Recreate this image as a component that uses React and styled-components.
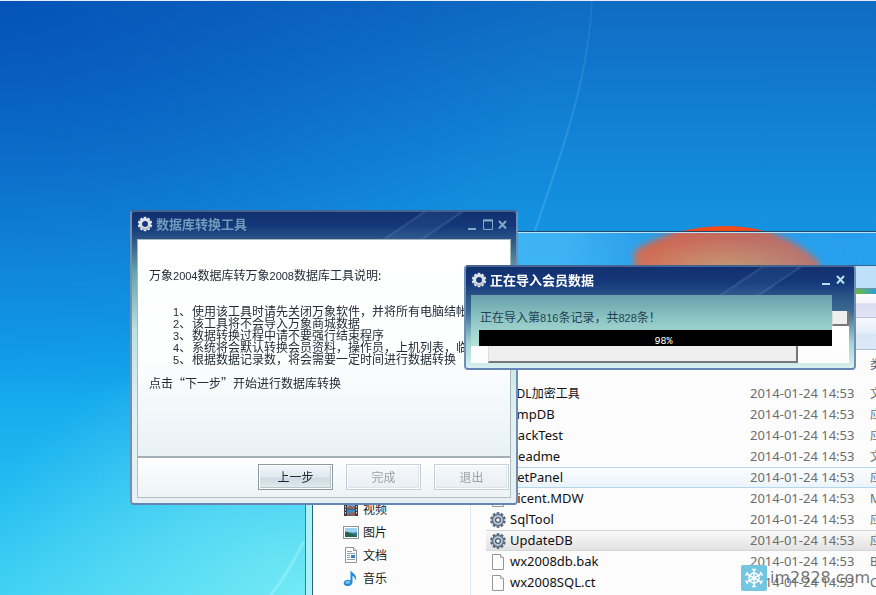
import React from 'react';
import styled, { createGlobalStyle } from 'styled-components';

const GlobalStyle = createGlobalStyle`
  * {
    box-sizing: border-box;
  }
  body {
    margin: 0;
    overflow: hidden;
    font-family: "Noto Sans CJK SC", "Liberation Sans", sans-serif;
    font-size: 12px;
  }
`;

const Desktop = styled.main`
  position: relative;
  min-height: 100vh;
  overflow: hidden;
  border-top: 1px solid #e4eef8;
  background:
    radial-gradient(ellipse 330px 260px at 300px 100%, rgba(132, 242, 246, 0.75), rgba(90, 225, 245, 0) 100%),
    radial-gradient(ellipse 560px 400px at 0 0, rgba(0, 70, 178, 0.65), rgba(0, 90, 205, 0) 100%),
    linear-gradient(180deg, #0f6bc2 0%, #1180d3 20%, #1492e0 38%, #12a4ec 62%, #25bdf1 84%, #3dcff3 100%);
`;

const Wallpaper = styled.svg`
  position: absolute;
  top: 0;
  left: 0;
`;

const Explorer = styled.section`
  position: absolute;
  top: 230px;
  left: 305px;
  right: 0;
  bottom: 0;
  display: flex;
  flex-direction: column;
  border-top: 1px solid #1f4668;
  border-left: 1px solid #3d7f92;
`;

const Glass = styled.header`
  height: 33px;
  border-top: 1px solid #b9e4fb;
  background: linear-gradient(90deg, rgba(90, 205, 255, 0.6), rgba(90, 200, 255, 0.6) 45%, rgba(110, 190, 255, 0.25) 60%, rgba(70, 175, 255, 0.4));
  backdrop-filter: blur(3px);
`;

const ExplorerBody = styled.div`
  flex: 1;
  display: flex;
  flex-direction: column;
  min-height: 0;
  border-left: 6px solid #a9f2f8;
  background: #fcfcfc;
`;

const AddressBar = styled.div`
  height: 29px;
  padding-top: 22px;
  border-top: 1px solid #33648e;
  border-bottom: 1px solid #e9f5fb;
  background: #bfe0f9;
`;

const LoadStrip = styled.div`
  height: 6px;
  border-top: 1px solid #7294a8;
  background: linear-gradient(90deg, #68b54c 0%, #68b54c 97%, #289ee0 100%);
`;

const MenuBar = styled.div`
  height: 24px;
  border-bottom: 1px solid #b7c6de;
  background: linear-gradient(180deg, #fdfdff 0%, #f3f3fa 40%, #d9dbef 42%, #e3e4f4 100%);
`;

const ToolBar = styled.div`
  height: 32px;
  border-bottom: 1px solid #a9bcd3;
  background: linear-gradient(180deg, #f5f9fe 0%, #e4eef9 48%, #d8e6f4 52%, #dde9f5 100%);
`;

const Columns = styled.div`
  flex: 1;
  display: flex;
  min-height: 0;
  border-left: 1px solid #2f5f7c;
`;

const Sidebar = styled.nav`
  width: 158px;
  padding: 147px 0 0 30px;
  border-right: 1px solid #dfe6f0;
`;

const Place = styled.a`
  display: flex;
  align-items: center;
  gap: 4px;
  height: 23px;
  color: #1a1a1a;
  text-decoration: none;
`;

const Files = styled.div`
  flex: 1;
  min-width: 0;
  padding-left: 15px;
  overflow: hidden;
`;

const FileTable = styled.table`
  width: 100%;
  table-layout: fixed;
  border-collapse: separate;
  border-spacing: 0;
`;

const HeadCell = styled.th`
  width: ${props => props.width || 'auto'};
  height: 33px;
  padding: 0 0 6px;
  overflow: hidden;
  color: #4c607a;
  font-weight: normal;
  text-align: left;
  white-space: nowrap;
`;

const rowLooks = {
  plain: 'border-color: transparent;',
  hover: 'border-color: #b5d6ea; background: linear-gradient(180deg, #fbfdff, #ebf4fc);',
  selected: 'border-color: #d6d6d6; background: linear-gradient(180deg, #f9f9f9, #e2e2e2);',
};

const FileCell = styled.td`
  height: 21px;
  padding: 0;
  border-top: 1px solid;
  border-bottom: 1px solid;
  overflow: hidden;
  color: ${props => (props.$muted ? '#6d6d6d' : '#111')};
  font-family: "Noto Sans", "Noto Sans CJK SC", sans-serif;
  font-size: ${props => (props.$small ? '12px' : '13px')};
  line-height: 19px;
  white-space: nowrap;
  ${props => rowLooks[props.$look]}
`;

const FileName = styled.span`
  display: flex;
  align-items: center;
  gap: 4px;
  height: 19px;
  padding-left: 4px;
`;

const Frame = styled.section`
  position: absolute;
  top: ${props => props.$top}px;
  left: ${props => props.$left}px;
  width: ${props => props.$width}px;
  padding: 0 5px 5px;
  border: 2px solid;
  border-color: #45648f #6f8fb4 #6684b4 #6f8fb4;
  border-radius: 4px;
  background: ${props => (props.$short
    ? 'linear-gradient(180deg, #12306f 0, #15397b 16px, #2c5688 30px, #3c6b93 45px, #9fd3d2 75px, #d8f0ef 100%)'
    : 'linear-gradient(180deg, #12306f 0, #14387a 14px, #2c5688 28px, #67a3a9 60px, #bde2e2 120px, #e2f0f1 200px, #e8f0f3 100%)')};
`;

const TitleBar = styled.header`
  display: flex;
  align-items: center;
  gap: 3px;
  height: ${props => props.$height}px;
  padding: 0 1px 3px 0;
  color: ${props => (props.$active ? '#fff' : '#6f9cbc')};
  background: linear-gradient(146deg, transparent 0 69%, rgba(130, 180, 220, 0.18) 69% 70%, rgba(130, 180, 220, 0.07) 70% 78%, rgba(130, 180, 220, 0.18) 78% 79%, transparent 79%);
`;

const Title = styled.h1`
  flex: 1;
  margin: 0;
  font-size: 13px;
  line-height: 20px;
`;

const TitleButton = styled.button`
  display: flex;
  width: 13px;
  height: 13px;
  padding: 0;
  border: 0;
  background: none;
  color: ${props => (props.$active ? '#b5e2ea' : '#7fabc4')};
`;

const WizardBody = styled.div`
  height: 219px;
  padding: 29px 0 0 11px;
  border: 1px solid #a9b8bd;
  border-bottom: 2px solid #a3afb4;
  overflow: hidden;
  background: linear-gradient(180deg, #fff 0%, #fdfefe 55%, #e9f1f6 100%);
  color: #222c38;
  line-height: 12px;
  white-space: nowrap;
`;

const Paragraph = styled.p`
  height: 12px;
  margin: 0;
`;

const Steps = styled.ol`
  margin: 24px 0 12px;
  padding-left: 24px;
  list-style: none;
`;

const Step = styled.li`
  display: grid;
  grid-template-columns: 19px 1fr;
  height: 12px;
`;

const Digits = styled.span`
  font-family: "Liberation Sans", sans-serif;
  font-size: 11px;
`;

const WizardFooter = styled.footer`
  display: flex;
  justify-content: flex-end;
  gap: 13px;
  height: 40px;
  padding: 6px 1px 0;
  border: 1px solid #b4bfc3;
  border-top: 0;
  background: linear-gradient(180deg, #fff, #edf3f5);
`;

const WizardButton = styled.button`
  width: 75px;
  height: 26px;
  padding: 0;
  border: 1px solid #8e9aa0;
  box-shadow: inset 0 0 0 1px #fff, inset -2px -2px 0 #b9c5ca;
  background: linear-gradient(180deg, #f2f6f8 0%, #dfe8ef 50%, #ced9e4 55%, #e3eeec 100%);
  color: #1c2630;
  font-family: inherit;
  font-size: 12px;
  line-height: 18px;

  &:disabled {
    border-color: #c7d0d5;
    box-shadow: inset 0 0 0 1px #fff, inset -2px -2px 0 #dde4e8;
    background: linear-gradient(180deg, #f6f8fa, #e9eff4);
    color: #98a2a9;
  }
`;

const ProgressTop = styled.div`
  display: flex;
  height: 51px;
`;

const ProgressPanel = styled.div`
  flex: 1;
  display: flex;
  flex-direction: column;
  justify-content: space-between;
  padding: 13px 0 0 8px;
  background: linear-gradient(180deg, #69a0ab 0%, #8cc3c3 45%, #b4e5da 100%);
  color: #1d4250;
`;

const Message = styled.p`
  margin: 0;
  padding-left: 1px;
  line-height: 18px;
`;

const ProgressBar = styled.div`
  height: 16px;
  padding-left: 16px;
  overflow: hidden;
  background: #000;
  color: #fff;
  font-family: "Liberation Mono", monospace;
  font-size: 10px;
  line-height: 24px;
  text-align: center;
`;

const SideStrip = styled.div`
  display: flex;
  flex-direction: column;
  width: 17px;
  padding-top: 16px;
`;

const Raised = styled.div`
  width: ${props => props.$width};
  height: ${props => props.$height}px;
  border-right: 2px solid #777;
  border-bottom: 2px solid #777;
  border-left: 1px solid #ddd;
  background: #efefef;
`;

const WhiteFill = styled.div`
  flex: 1;
  background: #fff;
`;

const ProgressBottom = styled.div`
  height: 17px;
  padding-left: 17px;
  background: #fdfdfd;
`;

const Watermark = styled.aside`
  position: absolute;
  right: 6px;
  bottom: 4px;
  display: flex;
  align-items: center;
  gap: 3px;
  color: rgba(90, 90, 90, 0.85);
  font-family: "DejaVu Sans", sans-serif;
  font-size: 16px;
  line-height: 26px;
`;

const toothAngles = [0, 36, 72, 108, 144, 180, 216, 252, 288, 324];

const TitleGear = () => (
  <svg width="16" height="16" viewBox="0 0 16 16" aria-hidden="true">
    <g fill="#e2e6ea">
      {toothAngles.map(a => (
        <rect key={a} x="6.7" y="0.8" width="2.6" height="3" transform={`rotate(${a} 8 8)`} />
      ))}
    </g>
    <circle cx="8" cy="8" r="4.5" fill="none" stroke="#dfe3e7" strokeWidth="3" />
    <path d="M3.6 10.5A5 5 0 0 0 12.6 10" fill="none" stroke="#9ba7b5" strokeWidth="1" />
  </svg>
);

const AppIcon = () => (
  <svg width="16" height="16" viewBox="0 0 16 16" aria-hidden="true">
    <g fill="#56657a">
      {toothAngles.map(a => (
        <rect key={a} x="6.6" y="0.2" width="2.8" height="3" transform={`rotate(${a} 8 8)`} />
      ))}
    </g>
    <circle cx="8" cy="8" r="5.2" fill="#dce5ed" stroke="#65758b" strokeWidth="2" />
    <circle cx="8" cy="8" r="4" fill="none" stroke="#b9c8d6" strokeWidth="1.6" />
    <circle cx="8" cy="8" r="2.4" fill="#fbfcfd" stroke="#46566d" strokeWidth="1.3" />
  </svg>
);

const PageIcon = () => (
  <svg width="16" height="16" viewBox="0 0 16 16" aria-hidden="true">
    <path d="M2.5.5h8l3 3v12h-11z" fill="#fdfdfd" stroke="#969696" />
    <path d="M10.5.5v3h3" fill="#ececec" stroke="#a5a5a5" />
  </svg>
);

const VideoIcon = () => (
  <svg width="16" height="16" viewBox="0 0 16 16" aria-hidden="true">
    <rect x="1" y="1" width="14" height="14" fill="#3a3f46" />
    <rect x="4" y="1.5" width="8" height="6" fill="#5da9e0" />
    <rect x="4" y="8.5" width="8" height="6" fill="#3d8ac4" />
    <path d="M4 7.5 7 4l2 2 3-1v2.5zM4 14.5l3-3 2 1 3-2v4z" fill="#a15a43" />
    <path d="M2.5 2v12M13.5 2v12" stroke="#e1e1e1" strokeDasharray="1.5 1.5" />
  </svg>
);

const PictureIcon = () => (
  <svg width="16" height="16" viewBox="0 0 16 16" aria-hidden="true">
    <rect x=".5" y="2.5" width="15" height="12" fill="#fff" stroke="#8795a1" />
    <rect x="2" y="4" width="12" height="9" fill="#9bd3ef" />
    <path d="M2 10c4-3 7 0 12-2v5H2z" fill="#317d9a" />
    <path d="M2 8c3-1 5 2 12 4v1H2z" fill="#28624f" />
  </svg>
);

const DocumentIcon = () => (
  <svg width="16" height="16" viewBox="0 0 16 16" aria-hidden="true">
    <path d="M2.5.5h8l3 3v12h-11z" fill="#fff" stroke="#8a97a3" />
    <path d="M10.5.5v3h3" fill="#e4e9ed" stroke="#8a97a3" />
    <path d="M4 4.5h5M4 6.5h8M4 8.5h3M4 10.5h3M4 12.5h8" stroke="#8da0b2" />
    <rect x="8" y="8" width="4" height="3" fill="#397fba" />
  </svg>
);

const MusicIcon = () => (
  <svg width="16" height="16" viewBox="0 0 16 16" aria-hidden="true">
    <path d="M7.500 0c.6 3 6 3.500 5.500 8.500-.4 1.200-.8 1.700-1.200 2.100.5-2.600-.6-4.100-2.300-4.600V12c0 5.200-9 5-8.800 1 .2-3 4-4.200 6.800-2.600V0z" fill="#2589d3" />
    <ellipse cx="4.700" cy="12.300" rx="2.400" ry="1.500" fill="#7cc8f2" />
  </svg>
);

const WheelLogo = () => (
  <svg width="26" height="26" viewBox="0 0 26 26" aria-hidden="true">
    <rect width="26" height="26" rx="2" fill="#72c6df" />
    <g stroke="#fff" strokeWidth="1.5" fill="none" strokeLinecap="round">
      {[0, 60, 120, 180, 240, 300].map(a => (
        <path key={a} d="M13 11V4.500M11.500 4.500h3" transform={`rotate(${a} 13 13)`} />
      ))}
      <circle cx="13" cy="13" r="5" />
    </g>
    <circle cx="13" cy="13" r="2" fill="#fff" />
  </svg>
);

const MinimizeGlyph = () => (
  <svg width="13" height="13" viewBox="0 0 13 13"><path d="M3 11h8" stroke="currentColor" strokeWidth="2" /></svg>
);

const MaximizeGlyph = () => (
  <svg width="13" height="13" viewBox="0 0 13 13">
    <path d="M2.500 2h9v9.500h-9z" fill="none" stroke="currentColor" />
    <path d="M2 2.500h10" stroke="currentColor" strokeWidth="2" />
  </svg>
);

const CloseGlyph = () => (
  <svg width="13" height="13" viewBox="0 0 13 13"><path d="M2 3l7 7.500M9 3l-7 7.500" stroke="currentColor" strokeWidth="2" /></svg>
);

const places = [
  { name: '视频', Icon: VideoIcon },
  { name: '图片', Icon: PictureIcon },
  { name: '文档', Icon: DocumentIcon },
  { name: '音乐', Icon: MusicIcon },
];

const files = [
  { name: 'SDL加密工具', type: '文', Icon: PageIcon, small: true },
  { name: 'TmpDB', type: '应', Icon: AppIcon },
  { name: 'PackTest', type: '应', Icon: AppIcon },
  { name: 'Readme', type: '文', Icon: PageIcon },
  { name: 'SetPanel', type: '应', Icon: AppIcon, look: 'hover' },
  { name: 'Sicent.MDW', type: 'M', Icon: PageIcon },
  { name: 'SqlTool', type: '应', Icon: AppIcon },
  { name: 'UpdateDB', type: '应', Icon: AppIcon, look: 'selected' },
  { name: 'wx2008db.bak', type: 'B', Icon: PageIcon },
  { name: 'wx2008SQL.ct', type: 'C', Icon: PageIcon },
];

const steps = [
  '使用该工具时请先关闭万象软件，并将所有电脑结帐',
  '该工具将不会导入万象商城数据',
  '数据转换过程中请不要强行结束程序',
  '系统将会默认转换会员资料，操作员，上机列表，临',
  '根据数据记录数，将会需要一定时间进行数据转换',
];

const FileRow = ({ file }) => {
  const look = file.look || 'plain';
  return (
    <tr>
      <FileCell $look={look} $small={file.small}>
        <FileName><file.Icon />{file.name}</FileName>
      </FileCell>
      <FileCell $look={look} $muted>2014-01-24 14:53</FileCell>
      <FileCell $look={look} $muted $small>{file.type}</FileCell>
    </tr>
  );
};

const ExplorerWindow = () => (
  <Explorer>
    <Glass />
    <ExplorerBody>
      <AddressBar><LoadStrip /></AddressBar>
      <MenuBar />
      <ToolBar />
      <Columns>
        <Sidebar>
          {places.map(({ name, Icon }) => (
            <Place key={name} href="#"><Icon />{name}</Place>
          ))}
        </Sidebar>
        <Files>
          <FileTable>
            <thead>
              <tr>
                <HeadCell width="264px" />
                <HeadCell width="120px" />
                <HeadCell>类</HeadCell>
              </tr>
            </thead>
            <tbody>
              {files.map(file => <FileRow key={file.name} file={file} />)}
            </tbody>
          </FileTable>
        </Files>
      </Columns>
    </ExplorerBody>
  </Explorer>
);

const ConverterWindow = () => (
  <Frame $top={209} $left={130} $width={388}>
    <TitleBar $height={27}>
      <TitleGear />
      <Title>数据库转换工具</Title>
      <TitleButton aria-label="最小化"><MinimizeGlyph /></TitleButton>
      <TitleButton aria-label="最大化"><MaximizeGlyph /></TitleButton>
      <TitleButton aria-label="关闭"><CloseGlyph /></TitleButton>
    </TitleBar>
    <WizardBody>
      <Paragraph>
        万象<Digits>2004</Digits>数据库转万象<Digits>2008</Digits>数据库工具说明:
      </Paragraph>
      <Steps>
        {steps.map((text, i) => (
          <Step key={text}>
            <span><Digits>{i + 1}</Digits>、</span>
            <span>{text}</span>
          </Step>
        ))}
      </Steps>
      <Paragraph>点击“下一步”开始进行数据库转换</Paragraph>
    </WizardBody>
    <WizardFooter>
      <WizardButton>上一步</WizardButton>
      <WizardButton disabled>完成</WizardButton>
      <WizardButton disabled>退出</WizardButton>
    </WizardFooter>
  </Frame>
);

const ImportWindow = () => (
  <Frame $top={264} $left={464} $width={392} $short>
    <TitleBar $height={28} $active>
      <TitleGear />
      <Title>正在导入会员数据</Title>
      <TitleButton $active aria-label="最小化"><MinimizeGlyph /></TitleButton>
      <TitleButton $active aria-label="关闭"><CloseGlyph /></TitleButton>
    </TitleBar>
    <ProgressTop>
      <ProgressPanel>
        <Message>
          正在导入第<Digits>816</Digits>条记录，共<Digits>828</Digits>条！
        </Message>
        <ProgressBar role="progressbar" aria-valuenow={98} aria-valuemin={0} aria-valuemax={100}>98%</ProgressBar>
      </ProgressPanel>
      <SideStrip>
        <Raised $width="100%" $height={15} />
        <WhiteFill />
      </SideStrip>
    </ProgressTop>
    <ProgressBottom>
      <Raised $width="310px" $height={17} />
    </ProgressBottom>
  </Frame>
);

const App = () => (
  <>
    <GlobalStyle />
    <Desktop>
      <Wallpaper width="876" height="595" viewBox="0 0 876 595" aria-hidden="true">
        <defs>
          <radialGradient id="flag" cx="0.5" cy="0.75" r="0.6">
            <stop offset="0" stopColor="#f09a3a" />
            <stop offset="0.6" stopColor="#f2682c" />
            <stop offset="1" stopColor="#f04a1a" />
          </radialGradient>
          <linearGradient id="ray" x1="0" y1="0" x2="0" y2="1">
            <stop offset="0" stopColor="#6cc4f4" stopOpacity="0.1" />
            <stop offset="1" stopColor="#6cc4f4" stopOpacity="0.35" />
          </linearGradient>
        </defs>
        <path d="M592 0C588 80 562 150 535 230" fill="none" stroke="url(#ray)" strokeWidth="2" />
        <path d="M304 540C294 560 284 578 270 595" fill="none" stroke="#c5fbfb" strokeOpacity="0.3" strokeWidth="3" />
        <path d="M634 290V250C660 234 690 225 725 225C765 225 800 240 820 262V290Z" fill="url(#flag)" />
      </Wallpaper>
      <ExplorerWindow />
      <ConverterWindow />
      <ImportWindow />
      <Watermark><WheelLogo />im2828.com</Watermark>
    </Desktop>
  </>
);

export default App;
